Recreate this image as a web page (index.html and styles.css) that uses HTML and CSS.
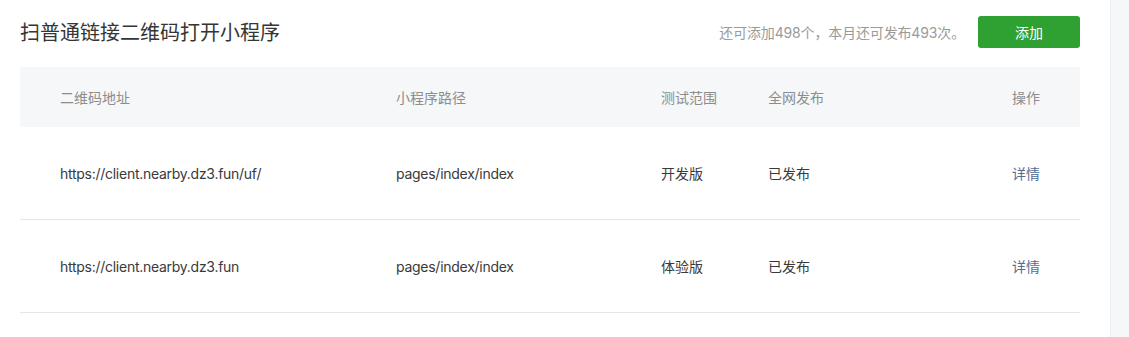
FILE: index.html
```html
<!DOCTYPE html>
<html lang="zh-CN">
<head>
<meta charset="utf-8">
<title>扫普通链接二维码打开小程序</title>
<link rel="stylesheet" href="styles.css">
</head>
<body>
<div class="page">
  <main class="main">
    <div class="topbar">
      <h1 class="title">扫普通链接二维码打开小程序</h1>
      <div class="actions">
        <span class="quota">还可添加498个，本月还可发布493次。</span>
        <button class="btn-primary">添加</button>
      </div>
    </div>
    <div class="table">
      <div class="row head">
        <div class="cell">二维码地址</div>
        <div class="cell">小程序路径</div>
        <div class="cell">测试范围</div>
        <div class="cell">全网发布</div>
        <div class="cell op">操作</div>
      </div>
      <div class="row body">
        <div class="cell latin">https://client.nearby.dz3.fun/uf/</div>
        <div class="cell latin">pages/index/index</div>
        <div class="cell">开发版</div>
        <div class="cell">已发布</div>
        <div class="cell op"><a class="link" href="#">详情</a></div>
      </div>
      <div class="row body">
        <div class="cell latin">https://client.nearby.dz3.fun</div>
        <div class="cell latin">pages/index/index</div>
        <div class="cell">体验版</div>
        <div class="cell">已发布</div>
        <div class="cell op"><a class="link" href="#">详情</a></div>
      </div>
    </div>
  </main>
  <aside class="side"></aside>
</div>
</body>
</html>
```
FILE: styles.css
```css
html, body {
  margin: 0;
  padding: 0;
  background: #ffffff;
}
body {
  font-family: Inter, "Noto Sans CJK SC", sans-serif;
  font-size: 14px;
  color: #353535;
}
.page {
  display: flex;
  height: 337px;
  overflow: hidden;
}
.main {
  width: 1110px;
  flex: none;
  padding: 0 30px 0 20px;
  box-sizing: border-box;
}
.side {
  flex: 1;
  background: #f6f7f9;
  border-left: 1px solid #eef0f3;
}
.topbar {
  display: flex;
  align-items: center;
  justify-content: space-between;
  height: 32px;
  padding-top: 16px;
  margin-bottom: 19px;
}
.title {
  margin: 0;
  font-family: "Noto Sans CJK SC", sans-serif;
  font-size: 20px;
  font-weight: 400;
  color: #353535;
  line-height: 32px;
}
.actions {
  display: flex;
  align-items: center;
  gap: 13px;
}
.quota {
  color: #9a9a9a;
  font-size: 14px;
  letter-spacing: -0.15px;
}
.btn-primary {
  width: 102px;
  height: 32px;
  border: 0;
  border-radius: 3px;
  background: #2fa133;
  color: #ffffff;
  font-family: "Noto Sans CJK SC", sans-serif;
  font-size: 14px;
  padding: 0;
}
.table {
  display: flex;
  flex-direction: column;
}
.row {
  display: grid;
  grid-template-columns: 336px 265px 107px 1fr 140px;
  align-items: center;
}
.row.head {
  height: 60px;
  background: #f6f7f9;
  color: #8d8d8d;
}
.row.body {
  height: 92px;
  border-bottom: 1px solid #e4e6eb;
  box-sizing: content-box;
  color: #3a3a3a;
}
.cell {
  padding-left: 40px;
  white-space: nowrap;
}
.cell.latin {
  letter-spacing: -0.27px;
}
.cell.op {
  text-align: right;
  padding-left: 0;
  padding-right: 40px;
}
.link {
  color: #576b95;
  text-decoration: none;
}
```
